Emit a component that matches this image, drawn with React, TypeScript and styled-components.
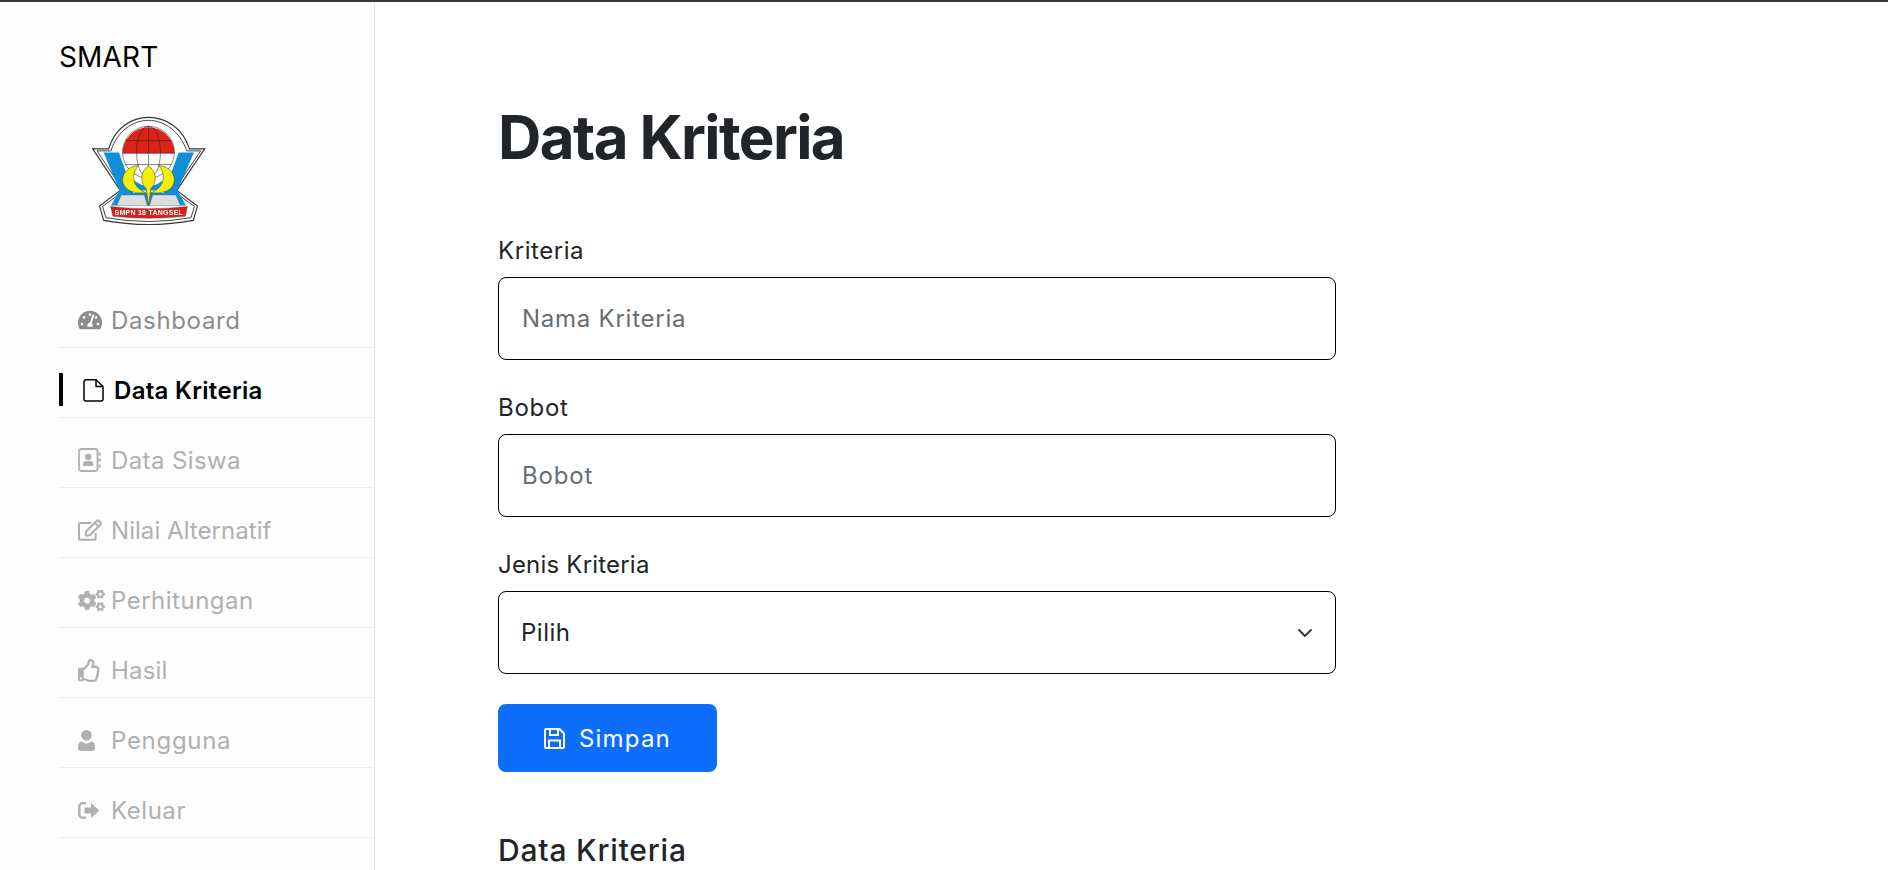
import React from "react";
import styled, { createGlobalStyle } from "styled-components";
import { FaTachometerAlt, FaRegEdit, FaCogs, FaRegThumbsUp } from "react-icons/fa";

const Global = createGlobalStyle`
  html, body { margin: 0; padding: 0; height: 100%; background: #fff; overflow: hidden; }
  body { font-family: Inter, "Liberation Sans", sans-serif; color: #212529; }
  * { box-sizing: border-box; }
`;

const Page = styled.div`
  display: flex;
  height: 870px;
  border-top: 2px solid #343a40;
  overflow: hidden;
`;
const Sidebar = styled.aside`
  flex: 0 0 375px;
  background: #fdfdfd;
  border-right: 1px solid #e9e9e9;
  padding: 35px 0 0 59px;
`;
const Brand = styled.div`
  font-size: 28px;
  line-height: 40px;
  color: #000;
  letter-spacing: 0.15px;
`;
const LogoWrap = styled.div`
  margin: 37px 0 0 31px;
  height: 113px;
  filter: blur(0.3px);
`;
const Nav = styled.nav`
  display: flex;
  flex-direction: column;
  margin-top: 51px;
`;
const Item = styled.a<{ $tone: "active" | "mid" | "soft" }>`
  height: 70px;
  display: flex;
  align-items: center;
  position: relative;
  border-bottom: 1px solid #eeeeee;
  padding-top: 15px;
  padding-left: ${(p) => (p.$tone === "active" ? 24 : 19)}px;
  font-size: 24px;
  font-weight: ${(p) => (p.$tone === "active" ? 600 : 400)};
  color: ${(p) => (p.$tone === "active" ? "#000" : p.$tone === "mid" ? "#8c8c8c" : "#b0b0b0")};
  ${(p) =>
    p.$tone === "active" &&
    `&::before { content: ""; position: absolute; left: 0; top: 25px; width: 4px; height: 33px; background: #000; }`}
`;
const IconSlot = styled.span<{ $w: number }>`
  width: ${(p) => p.$w}px;
  display: inline-flex;
  align-items: center;
  justify-content: flex-start;
  flex: none;
`;
const Label = styled.span<{ $ls: number }>`
  letter-spacing: ${(p) => p.$ls}px;
  white-space: nowrap;
`;
const Main = styled.main`
  flex: 1;
  padding: 99px 0 0 123px;
`;
const Title = styled.h1`
  margin: 0 0 60px;
  font-size: 60px;
  line-height: 72px;
  font-weight: 700;
  color: #212529;
  letter-spacing: -1.6px;
  white-space: nowrap;
`;
const Form = styled.form`
  width: 838px;
  display: flex;
  flex-direction: column;
`;
const Field = styled.div`
  margin-bottom: 30px;
`;
const FieldLabel = styled.label<{ $ls: number }>`
  display: block;
  font-size: 24px;
  line-height: 36px;
  margin-bottom: 8px;
  color: #212529;
  letter-spacing: ${(p) => p.$ls}px;
`;
const Input = styled.div`
  height: 83px;
  border: 1px solid #000;
  border-radius: 8px;
  background: #fff;
  display: flex;
  align-items: center;
  justify-content: space-between;
  padding: 0 22px 0 23px;
  font-size: 24px;
`;
const Placeholder = styled.span<{ $ls: number }>`
  color: #666d73;
  letter-spacing: ${(p) => p.$ls}px;
`;
const Value = styled.span`
  color: #212529;
  letter-spacing: 0.5px;
  margin-left: -1px;
`;
const Button = styled.button`
  width: 219px;
  height: 68px;
  background: #0d6efd;
  color: #fff;
  border: 0;
  border-radius: 8px;
  font: inherit;
  font-size: 24px;
  display: flex;
  align-items: center;
  justify-content: center;
  gap: 14px;
  letter-spacing: 1.2px;
`;
const SubTitle = styled.h2`
  margin: 60px 0 0;
  font-size: 30px;
  line-height: 36px;
  font-weight: 500;
  color: #212529;
  letter-spacing: 0.8px;
  white-space: nowrap;
`;

const Logo = () => (
  <svg width="117" height="113" viewBox="270 340 350 340">
    <path d="M277 445H325C345 380 395 350 445 350C495 350 548 380 568 445H614L530 570L592 617L580 660Q445 685 310 660L298 617L360 570Z" fill="#fff" stroke="#333" strokeWidth="3.5" />
    <path d="M290 451H332C350 392 398 359 445 359C492 359 540 392 560 451H602L520 572L583 618L573 652Q445 675 317 652L307 618L370 572Z" fill="#fff" stroke="#444" strokeWidth="3" />
    <path d="M310 456H356L400 580L372 582L332 615L358 570Z" fill="#0f8fd8" />
    <path d="M582 456H536L490 580L518 582L558 615L532 570Z" fill="#0f8fd8" />
    <path d="M332 615L372 578H520L558 615Z" fill="#0f8fd8" />
    <circle cx="445" cy="455" r="78" fill="#fff" />
    <path d="M367 458A78 78 0 0 1 523 458Z" fill="#dd2218" />
    <path d="M388 528Q445 585 502 528L498 570H392Z" fill="#0f8fd8" />
    <g fill="none" stroke="#222" strokeWidth="1.6">
      <circle cx="445" cy="455" r="78" />
      <ellipse cx="445" cy="455" rx="36" ry="78" />
      <path d="M445 377V533M367 458H523M376 420H514M376 492H514" />
    </g>
    <path d="M415 495C375 497 355 535 375 560C385 575 415 580 438 577C405 565 385 530 415 495Z" fill="#f7ee00" stroke="#333" strokeWidth="1.5" />
    <path d="M475 495C515 497 535 535 515 560C505 575 475 580 452 577C485 565 505 530 475 495Z" fill="#f7ee00" stroke="#333" strokeWidth="1.5" />
    <path d="M445 497C468 510 473 545 452 565L445 616L438 565C417 545 422 510 445 497Z" fill="#f7ee00" stroke="#333" strokeWidth="1.5" />
    <path d="M363 584H432L442 616H350Z" fill="#ddd" stroke="#666" strokeWidth="1" />
    <path d="M458 584H527L541 616H448Z" fill="#ddd" stroke="#666" strokeWidth="1" />
    <path d="M331 618Q445 632 562 618L556 648Q445 660 338 648Z" fill="#d8201c" stroke="#333" strokeWidth="1" />
    <text x="446" y="645" textAnchor="middle" fontFamily="'Liberation Sans', sans-serif" fontWeight="700" fontSize="21" fill="#fff" letterSpacing="0.8">SMPN 18 TANGSEL</text>
  </svg>
);

const FileIcon = () => (
  <svg width="21" height="23" viewBox="0 0 21 23" fill="none" stroke="currentColor" strokeWidth="1.5" strokeLinejoin="round">
    <path d="M13 0.8H3a2 2 0 0 0-2 2V20a2 2 0 0 0 2 2H18a2 2 0 0 0 2-2V7.5Z" />
    <path d="M13 0.8V7.5H20" />
  </svg>
);
const BookIcon = () => (
  <svg width="23" height="24" viewBox="0 0 23 24">
    <rect x="1" y="1" width="18.5" height="22" rx="2.5" fill="none" stroke="currentColor" strokeWidth="1.8" />
    <circle cx="10.2" cy="9" r="3.2" fill="currentColor" />
    <path d="M4.8 18c0-3.5 1.5-5 3-5h4.8c1.5 0 3 1.5 3 5Z" fill="currentColor" />
    <path d="M20.5 4.5h2.3v3h-2.3ZM20.5 10.5h2.3v3h-2.3ZM20.5 16.5h2.3v3h-2.3Z" fill="currentColor" />
  </svg>
);
const UserIcon = () => (
  <svg width="17" height="21" viewBox="0 0 17 21" fill="currentColor">
    <circle cx="8.5" cy="5.3" r="5.3" />
    <path d="M0 17C0 12.5 2.5 11.5 4 11.5C5.5 13 7 13.5 8.5 13.5C10 13.5 11.5 13 13 11.5C14.5 11.5 17 12.5 17 17V18C17 20 15.5 21 14 21H3C1.5 21 0 20 0 18Z" />
  </svg>
);
const ExitIcon = () => (
  <svg width="22" height="17" viewBox="0 0 22 17">
    <path d="M8 1.3H4.5a3.2 3.2 0 0 0-3.2 3.2v8a3.2 3.2 0 0 0 3.2 3.2H8" fill="none" stroke="currentColor" strokeWidth="2.4" />
    <path d="M6.5 5.5H13V1L21.5 8.5L13 16V11.5H6.5Z" fill="currentColor" />
  </svg>
);
const SaveIcon = () => (
  <svg width="21" height="21" viewBox="0 0 21 21" fill="none" stroke="currentColor" strokeWidth="2">
    <path d="M2 1H15.5L20 5.5V19a1 1 0 0 1-1 1H2a1 1 0 0 1-1-1V2a1 1 0 0 1 1-1Z" />
    <path d="M6 1V7H14V1M5 20V12.5H16V20" />
  </svg>
);

const items = [
  { label: "Dashboard", icon: <FaTachometerAlt size={24} />, tone: "mid", w: 33, ls: 0.65 },
  { label: "Data Kriteria", icon: <FileIcon />, tone: "active", w: 31, ls: 0.3 },
  { label: "Data Siswa", icon: <BookIcon />, tone: "soft", w: 33, ls: 0.4 },
  { label: "Nilai Alternatif", icon: <FaRegEdit size={24} />, tone: "soft", w: 33, ls: 0.05 },
  { label: "Perhitungan", icon: <FaCogs size={27} />, tone: "soft", w: 33, ls: 0.5 },
  { label: "Hasil", icon: <FaRegThumbsUp size={23} />, tone: "soft", w: 33, ls: 0.2 },
  { label: "Pengguna", icon: <UserIcon />, tone: "soft", w: 33, ls: 0.7 },
  { label: "Keluar", icon: <ExitIcon />, tone: "soft", w: 33, ls: 0.55 },
] as const;

export default function App() {
  return (
    <>
      <Global />
      <Page>
        <Sidebar>
          <Brand>SMART</Brand>
          <LogoWrap><Logo /></LogoWrap>
          <Nav>
            {items.map(({ label, icon, tone, w, ls }) => (
              <Item key={label} $tone={tone}>
                <IconSlot $w={w}>{icon}</IconSlot>
                <Label $ls={ls}>{label}</Label>
              </Item>
            ))}
          </Nav>
        </Sidebar>
        <Main>
          <Title>Data Kriteria</Title>
          <Form>
            <Field>
              <FieldLabel $ls={0.55}>Kriteria</FieldLabel>
              <Input><Placeholder $ls={0.75}>Nama Kriteria</Placeholder></Input>
            </Field>
            <Field>
              <FieldLabel $ls={0.7}>Bobot</FieldLabel>
              <Input><Placeholder $ls={0.8}>Bobot</Placeholder></Input>
            </Field>
            <Field>
              <FieldLabel $ls={0.2}>Jenis Kriteria</FieldLabel>
              <Input>
                <Value>Pilih</Value>
                <svg width="16" height="16" viewBox="0 0 16 16"><path d="M2 5l6 6 6-6" fill="none" stroke="#343a40" strokeWidth="2" strokeLinecap="round" strokeLinejoin="round" /></svg>
              </Input>
            </Field>
            <Button type="button"><SaveIcon />Simpan</Button>
          </Form>
          <SubTitle>Data Kriteria</SubTitle>
        </Main>
      </Page>
    </>
  );
}
